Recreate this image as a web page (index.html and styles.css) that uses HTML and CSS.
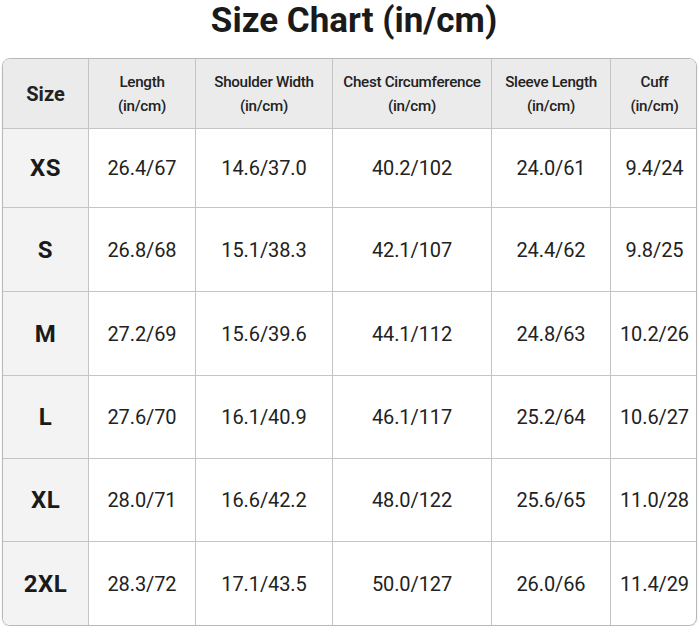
FILE: index.html
```html
<!DOCTYPE html>
<html>
<head>
<meta charset="utf-8">
<link rel="stylesheet" href="styles.css">
</head>
<body>
<h1 class="title">Size Chart (in/cm)</h1>
<div class="chart">
  <div class="cell head size-col first">Size</div>
  <div class="cell head">Length<br>(in/cm)</div>
  <div class="cell head">Shoulder Width<br>(in/cm)</div>
  <div class="cell head">Chest Circumference<br>(in/cm)</div>
  <div class="cell head">Sleeve Length<br>(in/cm)</div>
  <div class="cell head last">Cuff<br>(in/cm)</div>

  <div class="cell label">XS</div><div class="cell">26.4/67</div><div class="cell">14.6/37.0</div><div class="cell">40.2/102</div><div class="cell">24.0/61</div><div class="cell last">9.4/24</div>
  <div class="cell label">S</div><div class="cell">26.8/68</div><div class="cell">15.1/38.3</div><div class="cell">42.1/107</div><div class="cell">24.4/62</div><div class="cell last">9.8/25</div>
  <div class="cell label">M</div><div class="cell">27.2/69</div><div class="cell">15.6/39.6</div><div class="cell">44.1/112</div><div class="cell">24.8/63</div><div class="cell last">10.2/26</div>
  <div class="cell label">L</div><div class="cell">27.6/70</div><div class="cell">16.1/40.9</div><div class="cell">46.1/117</div><div class="cell">25.2/64</div><div class="cell last">10.6/27</div>
  <div class="cell label">XL</div><div class="cell">28.0/71</div><div class="cell">16.6/42.2</div><div class="cell">48.0/122</div><div class="cell">25.6/65</div><div class="cell last">11.0/28</div>
  <div class="cell label bottom">2XL</div><div class="cell bottom">28.3/72</div><div class="cell bottom">17.1/43.5</div><div class="cell bottom">50.0/127</div><div class="cell bottom">26.0/66</div><div class="cell last bottom">11.4/29</div>
</div>
</body>
</html>
```
FILE: styles.css
```css
html, body {
  margin: 0;
  padding: 0;
  background: #ffffff;
}
body {
  font-family: Roboto, "Liberation Sans", sans-serif;
  color: #1c1c1c;
  width: 700px;
}
.title {
  margin: 0;
  height: 58px;
  box-sizing: border-box;
  text-align: center;
  font-size: 35px;
  font-weight: 700;
  line-height: 42px;
  color: #1a1a1a;
  padding-left: 8px;
}
.chart {
  margin-left: 2px;
  width: 695px;
  display: grid;
  grid-template-columns: 86px 107px 137px 159px 119px 87px;
  grid-template-rows: 70px 79px 84px 84px 83px 83px 83px;
  border: 1px solid #b8b8b8;
  border-radius: 8px;
  overflow: hidden;
  box-sizing: border-box;
  box-shadow: 0 1px 2px rgba(0,0,0,0.12);
}
.cell {
  display: flex;
  align-items: center;
  justify-content: center;
  text-align: center;
  border-right: 1px solid #c4c4c4;
  border-bottom: 1px solid #c4c4c4;
  font-size: 20px;
  color: #222;
  letter-spacing: -0.1px;
}
.cell.last { border-right: none; }
.cell.bottom { border-bottom: none; }
.head {
  background: #ebebeb;
  font-size: 15.2px;
  line-height: 24px;
  font-weight: 500;
  letter-spacing: -0.3px;
  color: #222;
}
.head.size-col {
  font-size: 20px;
  font-weight: 700;
  letter-spacing: 0;
}
.label {
  background: #f3f3f3;
  font-size: 24px;
  font-weight: 700;
  color: #1a1a1a;
  letter-spacing: 0.5px;
}
```
